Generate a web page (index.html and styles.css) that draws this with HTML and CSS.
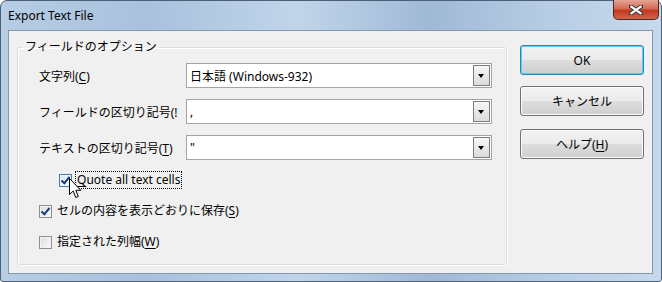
FILE: index.html
```html
<!DOCTYPE html>
<html lang="ja">
<head>
  <meta charset="UTF-8">
  <title>Export Text File</title>
  <link rel="stylesheet" href="styles.css">
</head>
<body>
  <div class="window">
    <div class="titlebar">
      <span class="title">Export Text File</span>
      <button class="close" aria-label="Close">
        <svg width="14" height="10" viewBox="0 0 14 10">
          <path d="M1 1 L13 9 M13 1 L1 9" stroke="#3a3a3a" stroke-width="4.2" stroke-linecap="square"/>
          <path d="M1.5 1.2 L12.5 8.8 M12.5 1.2 L1.5 8.8" stroke="#fff" stroke-width="2.2"/>
        </svg>
      </button>
    </div>

    <div class="client">
      <fieldset class="group">
        <legend>フィールドのオプション</legend>

        <div class="row">
          <label class="label">文字列(<u>C</u>)</label>
          <div class="combo">
            <span class="combo-text">日本語 (Windows-932)</span>
            <span class="combo-btn"></span>
          </div>
        </div>
        <div class="row">
          <label class="label">フィールドの区切り記号(!</label>
          <div class="combo">
            <span class="combo-text">,</span>
            <span class="combo-btn"></span>
          </div>
        </div>
        <div class="row">
          <label class="label">テキストの区切り記号(<u>T</u>)</label>
          <div class="combo">
            <span class="combo-text">"</span>
            <span class="combo-btn"></span>
          </div>
        </div>

        <div class="check check-indent">
          <span class="box checked hot"></span>
          <span class="check-label focus"><u>Q</u>uote all text cells</span>
          <svg class="cursor" width="13" height="21" viewBox="0 0 13 21">
            <path d="M0.5 0.5 L0.5 16.5 L4.2 13 L6.8 19.5 L9.3 18.4 L6.8 12.3 L11.8 12.3 Z" fill="#fff" stroke="#000" stroke-width="1" stroke-linejoin="miter"/>
          </svg>
        </div>
        <div class="check">
          <span class="box checked"></span>
          <span class="check-label">セルの内容を表示どおりに保存(<u>S</u>)</span>
        </div>
        <div class="check">
          <span class="box"></span>
          <span class="check-label">指定された列幅(<u>W</u>)</span>
        </div>
      </fieldset>

      <div class="buttons">
        <button class="btn default">OK</button>
        <button class="btn">キャンセル</button>
        <button class="btn">ヘルプ(<u>H</u>)</button>
      </div>
    </div>
  </div>
</body>
</html>
```

FILE: styles.css
```css
body {
  margin: 0;
  background: #ffffff;
  font-family: "Segoe UI", "Noto Sans", "Noto Sans CJK JP", sans-serif;
  font-size: 12px;
  color: #000;
}
u {
  text-decoration: underline;
  text-underline-offset: 2px;
}
.window {
  width: 662px;
  height: 282px;
  box-sizing: border-box;
  padding: 0 8px 7px 7px;
  display: flex;
  flex-direction: column;
  border: 1px solid #4d5f77;
  border-radius: 7px 7px 3px 3px;
  background: linear-gradient(90deg, #b7cde5 0%, #a8c1dd 22%, #c0d5ea 45%, #9fb9d6 65%, #b9cfe6 85%, #c6d9ec 100%);
}
.titlebar {
  height: 29px;
  display: flex;
  align-items: flex-start;
  justify-content: space-between;
}
.title {
  margin: 7px 0 0 0;
  line-height: 16px;
  color: #000;
}
.close {
  width: 46px;
  height: 20px;
  margin: -1px -6px 0 0;
  padding: 0;
  border: 1px solid #4a2a28;
  border-top: none;
  border-radius: 0 0 5px 5px;
  background: linear-gradient(#e6a597 0%, #d36a54 45%, #c2391f 55%, #d0654a 100%);
  display: flex;
  align-items: center;
  justify-content: center;
}
.client {
  flex: 1;
  display: flex;
  border: 1px solid #8597ae;
  background: #f0f0f0;
}
.group {
  width: 490px;
  box-sizing: border-box;
  margin: 8px 0 8px 8px;
  padding: 8px 0 0 21px;
  border: 1px solid #d5dfe5;
  border-radius: 3px;
  box-shadow: inset 1px 1px 0 #fff, 1px 1px 0 #fff;
}
.group legend {
  margin-left: -16px;
  padding: 0 2px;
  line-height: 16px;
}
.row {
  display: flex;
  align-items: center;
  height: 25px;
  margin-bottom: 11px;
}
.label {
  width: 143px;
  margin-right: 4px;
  white-space: nowrap;
  overflow: hidden;
}
.combo {
  width: 306px;
  height: 25px;
  box-sizing: border-box;
  border: 1px solid #a4a4a4;
  background: #fff;
  display: flex;
  align-items: center;
  padding: 1px;
}
.combo-text {
  flex: 1;
  padding-left: 2px;
}
.combo-btn {
  width: 17px;
  height: 21px;
  box-sizing: border-box;
  border: 1px solid #7c7c7c;
  background: linear-gradient(#f6f6f6, #dcdcdc);
  position: relative;
}
.combo-btn::after {
  content: "";
  position: absolute;
  left: 4px;
  top: 8px;
  border-left: 3.5px solid transparent;
  border-right: 3.5px solid transparent;
  border-top: 4px solid #000;
}
.check {
  display: flex;
  align-items: center;
  height: 18px;
  margin-top: 12px;
  position: relative;
}
.check-indent {
  margin-top: 8px;
  margin-left: 20px;
  margin-bottom: 0;
}
.check + .check {
  margin-top: 13px;
}
.box {
  width: 13px;
  height: 13px;
  box-sizing: border-box;
  border: 1px solid #8e8f8f;
  background: linear-gradient(135deg, #dcdcdc, #fbfbfb);
  box-shadow: inset 0 0 0 1px #f4f4f4;
  margin-right: 5px;
  position: relative;
}
.box.hot {
  border-color: #3c7fb1;
  background: linear-gradient(135deg, #cfe9f9, #ffffff);
}
.box.checked::after {
  content: "";
  position: absolute;
  left: 3px;
  top: 0px;
  width: 3px;
  height: 7px;
  border: solid #1f3c7a;
  border-width: 0 2px 2px 0;
  transform: rotate(40deg);
}
.check-label {
  line-height: 16px;
  white-space: nowrap;
}
.focus {
  outline: 1px dotted #000;
  outline-offset: 0;
  padding: 0 1px;
  margin-left: -1px;
}
.cursor {
  position: absolute;
  left: 10px;
  top: 7px;
}
.buttons {
  display: flex;
  flex-direction: column;
  margin: 14px 0 0 13px;
}
.btn {
  width: 124px;
  height: 30px;
  margin-bottom: 11px;
  padding: 0;
  font: inherit;
  color: #000;
  border: 1px solid #707070;
  border-radius: 3px;
  background: linear-gradient(#f2f2f2 0%, #ebebeb 49%, #dddddd 50%, #cfcfcf 100%);
  box-shadow: inset 0 0 0 1px #fbfbfb;
}
.btn:nth-child(2) {
  margin-bottom: 13px;
}
.btn.default {
  border-color: #3c7fb1;
  box-shadow: inset 0 0 0 1px #48d4f6;
}
```
